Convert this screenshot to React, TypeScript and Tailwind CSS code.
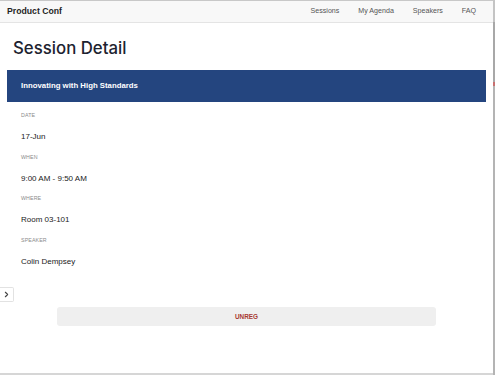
import { ChevronRight } from "lucide-react";

const details = [
  { label: "DATE", value: "17-Jun" },
  { label: "WHEN", value: "9:00 AM - 9:50 AM" },
  { label: "WHERE", value: "Room 03-101" },
  { label: "SPEAKER", value: "Colin Dempsey" },
];

const links = ["Sessions", "My Agenda", "Speakers", "FAQ"];

export default function App() {
  return (
    <div className="flex h-[375px] w-[495px] bg-[#d6d6d6] font-['Liberation_Sans',Arial,sans-serif]">
      <div className="flex h-[373px] w-[493px] flex-col border-t border-[#c8c8c8] bg-white">
        <nav className="flex h-[22px] items-center justify-between border-b border-[#e4e4e4] bg-[#f8f8f8] pl-[7px] pr-[17px]">
          <span className="text-[8.7px] font-bold text-[#1f1f1f]">Product Conf</span>
          <div className="flex gap-[19px] text-[7.1px] text-[#555]">
            {links.map((l) => (
              <span key={l}>{l}</span>
            ))}
          </div>
        </nav>

        <h1 className="mt-[15px] pl-[13px] font-['Inter','Liberation_Sans',sans-serif] text-[16.8px] font-medium leading-[20px] text-[#1d2330]">
          Session Detail
        </h1>

        <div className="mx-[7px] mt-[12px] flex h-[32px] items-center bg-[#24457f] pl-[14px] text-[7.8px] font-bold text-white">
          Innovating with High Standards
        </div>

        <div className="flex flex-col pl-[21px] pt-[9px]">
          {details.map((d) => (
            <div key={d.label} className="flex h-[41.5px] flex-col">
              <span className="text-[5.3px] leading-[9px] tracking-[0.02em] text-[#8a8a8a]">{d.label}</span>
              <span className="mt-[11px] text-[8px] leading-[11px] text-[#1a1a1a]">{d.value}</span>
            </div>
          ))}
        </div>

        <div className="mt-[10px] flex h-[15px] w-[14px] items-center justify-center rounded-r-[2px] border border-l-0 border-[#e2e2e2] bg-white">
          <ChevronRight className="h-[9px] w-[9px] text-[#444]" strokeWidth={3} />
        </div>

        <div className="ml-[57px] mt-[5px] flex h-[19px] w-[379px] items-center justify-center rounded-[3px] bg-[#efefef] text-[6.4px] font-bold text-[#a83a32]">
          UNREG
        </div>
      </div>
      <div className="flex w-[2px] flex-col">
        <div className="h-[22px] bg-[#c4c4c4]" />
        <div className="h-[60px] bg-[#a8a8a8]" />
        <div className="h-[4px] bg-[#c87070]" />
        <div className="flex-1 bg-[#b4b4b4]" />
      </div>
    </div>
  );
}
